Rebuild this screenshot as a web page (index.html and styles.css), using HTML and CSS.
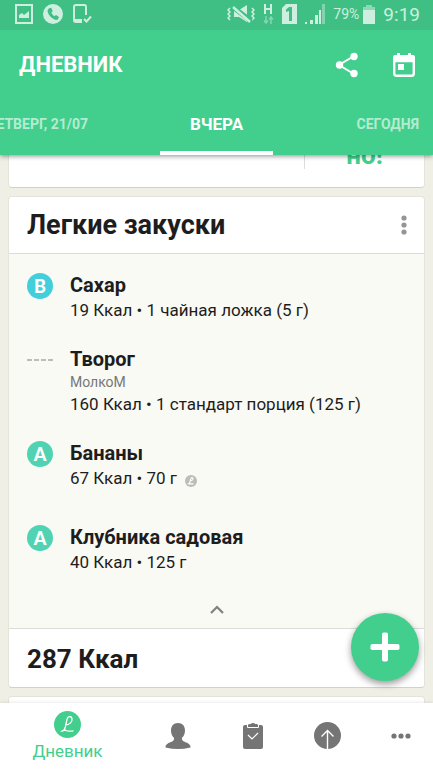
FILE: index.html
```
<!DOCTYPE html>
<html lang="ru">
<head>
<meta charset="utf-8">
<meta name="viewport" content="width=device-width, initial-scale=1">
<title>Дневник</title>
<link rel="stylesheet" href="styles.css">
</head>
<body>
<header class="top">
  <div class="status">
    <div class="status-left">
      <svg width="18" height="20" viewBox="0 0 18 20" fill="none" stroke="currentColor" stroke-width="2"><path d="M1 1h16v18H1z"/><path d="M4 14v-3l3-2 2 2 5-4v7z" fill="currentColor" stroke="none"/></svg>
      <svg width="20" height="20" viewBox="0 0 20 20"><circle cx="10" cy="10" r="10" fill="currentColor"/><path class="status-cut" d="M6.200 4.200 8.200 3.800 9.800 7.200 8.300 8.600Q9.200 10.800 11.400 12.200L13 11l3 2-1 2.300Q13.500 16.500 11 15.300 5.800 12.500 4.600 7.500 4.300 5.200 6.200 4.200z"/></svg>
      <svg width="19" height="20" viewBox="0 0 19 20" fill="none" stroke="currentColor" stroke-width="2"><path d="M13 11V3Q13 1 11.500 1H3Q1 1 1 3V16Q1 18 3 18H9M1 16H9"/><path d="m11 15 2.500 2.500L18 12.500"/></svg>
    </div>
    <div class="status-right">
      <svg width="28" height="20" viewBox="0 0 28 20" fill="none" stroke="currentColor"><path d="M3 4 1 6l2 2-2 2 2 2-2 2 2 2M25 4l2 2-2 2 2 2-2 2 2 2-2 2" stroke-width="1.500"/><path d="M7 6h5l8-5v17l-8-5H7z" fill="currentColor" stroke="none"/><path class="status-slash" d="M6 3l18 14" stroke-width="5"/><path d="M6 3l17 15" stroke-width="2.500"/></svg>
      <svg width="11" height="20" viewBox="0 0 11 20" fill="none" stroke="currentColor" stroke-width="2"><path d="M2 0v10M8 0v10M2 5h6"/><path d="M3 12v7M1 16.500l2 2.500 2-2.500M8 20v-7M6 15.500 8 13l2 2.500" stroke-width="1.500" opacity=".5"/></svg>
      <svg width="15" height="20" viewBox="0 0 15 20"><path d="M4 0h11v20H0V4z" fill="currentColor"/><path class="status-cut" d="M7 3h3v14H7V7L4 8V5.500z"/></svg>
      <svg width="20" height="20" viewBox="0 0 20 20" fill="currentColor"><path d="M0 18h2v2H0zM5 16h3v4H5zM10 11h3v9h-3zM14 6h2v14h-2z"/><path d="M17 0h3v20h-3z" opacity=".45"/></svg>
      <span class="battery-text">79%</span>
      <svg width="12" height="19" viewBox="0 0 12 19" fill="currentColor"><path d="M3 0h6v2h3v3H0V2h3z" opacity=".55"/><path d="M0 5h12v14H0z"/></svg>
      <span class="clock">9:19</span>
    </div>
  </div>
  <div class="toolbar">
    <h1 class="title">ДНЕВНИК</h1>
    <button class="tool" type="button" aria-label="Поделиться"><svg width="24" height="26" viewBox="0 0 24 26" fill="currentColor"><path d="M19 4 4 13l15 9" fill="none" stroke="currentColor" stroke-width="2"/><circle cx="19" cy="4.500" r="3.700"/><circle cx="4.500" cy="13" r="3.700"/><circle cx="19" cy="21.500" r="3.700"/></svg></button>
    <button class="tool" type="button" aria-label="Календарь"><svg width="22" height="26" viewBox="0 0 22 26" fill="none" stroke="currentColor"><path d="M1.200 9h19.600v12.500q0 2.300-2.300 2.300h-15q-2.300 0-2.300-2.300z" stroke-width="2.400"/><path d="M0 9V5q0-2 2-2h18q2 0 2 2v4z" fill="currentColor" stroke="none"/><path d="M5.500 1v4M16.500 1v4" stroke-width="3"/><path d="M5 12h6v6H5z" fill="currentColor" stroke="none"/></svg></button>
  </div>
  <nav class="tabs" aria-label="Дни">
    <a class="tab tab-prev" href="#">ЧЕТВЕРГ, 21/07</a>
    <a class="tab tab-current" href="#" aria-current="page">ВЧЕРА</a>
    <a class="tab tab-next" href="#">СЕГОДНЯ</a>
  </nav>
</header>

<main class="feed">
  <section class="card card-summary">
    <div class="summary-row"><span class="verdict">но!</span></div>
  </section>

  <section class="card">
    <div class="card-head">
      <h2 class="card-title">Легкие закуски</h2>
      <button class="more" type="button" aria-label="Ещё"><svg width="6" height="20" viewBox="0 0 6 20" fill="currentColor"><circle cx="3" cy="3" r="2.600"/><circle cx="3" cy="10" r="2.600"/><circle cx="3" cy="17" r="2.600"/></svg></button>
    </div>
    <div class="card-body">
      <ul class="foods">
        <li class="food">
          <span class="grade grade-b">B</span>
          <div class="food-text"><h3 class="food-name">Сахар</h3><p class="food-info">19 Ккал • 1 чайная ложка (5 г)</p></div>
        </li>
        <li class="food">
          <span class="grade-none"></span>
          <div class="food-text"><h3 class="food-name">Творог</h3><p class="food-brand">МолкоМ</p><p class="food-info">160 Ккал • 1 стандарт порция (125 г)</p></div>
        </li>
        <li class="food food-verified">
          <span class="grade grade-a">A</span>
          <div class="food-text"><h3 class="food-name">Бананы</h3><p class="food-info">67 Ккал • 70 г <svg class="verified" width="12" height="12" viewBox="0 0 27 27"><circle cx="13.500" cy="13.500" r="13.500" fill="currentColor"/><path d="M10 14c4 0 8-3 8-6s-4-3-5 1l-3 10q-1 2-2 1h11" fill="none" stroke="#fff" stroke-width="2.500"/></svg></p></div>
        </li>
        <li class="food">
          <span class="grade grade-a">A</span>
          <div class="food-text"><h3 class="food-name">Клубника садовая</h3><p class="food-info">40 Ккал • 125 г</p></div>
        </li>
      </ul>
      <button class="collapse" type="button" aria-label="Свернуть"><svg width="14" height="9" viewBox="0 0 14 9" fill="none" stroke="currentColor" stroke-width="2.200"><path d="M1 8l6-6 6 6"/></svg></button>
    </div>
    <p class="total">287 Ккал</p>
  </section>

  <section class="card card-next"></section>
</main>

<footer class="bottom">
  <button class="fab" type="button" aria-label="Добавить"><svg width="30" height="30" viewBox="0 0 30 30" fill="currentColor"><rect x="12" y="0.500" width="6" height="29" rx="1.800"/><rect x="0.500" y="12" width="29" height="6" rx="1.800"/></svg></button>
  <nav class="navbar" aria-label="Разделы">
    <a class="nav nav-active" href="#"><svg width="27" height="27" viewBox="0 0 27 27"><circle cx="13.500" cy="13.500" r="13.500" fill="currentColor"/><path d="M11 14C16 14 18.500 10.500 18 7.500 17 4.500 13.500 5 13 8.500L11.300 16Q10.500 20 8 20Q10 18.500 12 19.500T19.500 19.800" fill="none" stroke="#fff" stroke-width="1.300"/></svg><span>Дневник</span></a>
    <a class="nav" href="#" aria-label="Профиль"><svg width="26" height="26" viewBox="0 0 26 26" fill="currentColor"><path d="M13 0C17.500 0 20 3 20 7.500 20 11 18.800 13 17 14.800 16.500 17 17.500 18 20 19Q26 21 25.500 24.500 19 26 13 26T.500 24.500Q0 21 6 19C8.500 18 9.500 17 9 14.800 7.200 13 6 11 6 7.500 6 3 8.500 0 13 0z"/></svg></a>
    <a class="nav" href="#" aria-label="План"><svg width="20" height="26" viewBox="0 0 20 26"><path d="M2 2H18Q20 2 20 4V24Q20 26 18 26H2Q0 26 0 24V4Q0 2 2 2z" fill="currentColor"/><path d="M4.500 1.500V4.500H15.500V1.500" fill="none" stroke="#fff"/><path d="M5.500 1H8Q8 0 10 0T12 1H14.500V3.500H5.500z" fill="currentColor"/><path d="m5 12 4 4 6-6" fill="none" stroke="#fff" stroke-width="1.200"/></svg></a>
    <a class="nav" href="#" aria-label="Прогресс"><svg width="27" height="27" viewBox="0 0 27 27"><circle cx="13.500" cy="13.500" r="13.500" fill="currentColor"/><path d="M13.500 27V9M7.500 14.500l6-6 6 6" fill="none" stroke="#fff" stroke-width="1.400"/></svg></a>
    <a class="nav nav-last" href="#" aria-label="Меню"><svg width="20" height="6" viewBox="0 0 20 6" fill="currentColor"><circle cx="3" cy="3" r="2.600"/><circle cx="10" cy="3" r="2.600"/><circle cx="17" cy="3" r="2.600"/></svg></a>
  </nav>
</footer>
</body>
</html>
```
FILE: styles.css
```
* { box-sizing: border-box; }

body {
  margin: 0;
  height: 100vh;
  display: flex;
  flex-direction: column;
  overflow: hidden;
  background: #efefe6;
  color: #1d1d1d;
  font-family: Roboto, "Noto Sans", sans-serif;
}

h1, h2, h3, p, ul { margin: 0; padding: 0; }
ul { list-style: none; }
a { color: inherit; text-decoration: none; }
svg { display: block; flex: none; }
button {
  display: flex;
  align-items: center;
  justify-content: center;
  padding: 0;
  border: 0;
  background: none;
  color: inherit;
}

/* Header */
.top {
  position: relative;
  z-index: 1;
  flex: none;
  background: #42cf8d;
  color: #fff;
  box-shadow: 0 1px 5px rgba(0, 0, 0, .45);
}
.status {
  display: flex;
  justify-content: space-between;
  height: 30px;
  padding: 0 13px 2px 15px;
  background: #3fbf83;
  color: #ceefdf;
}
.status-left, .status-right { display: flex; align-items: center; }
.status-left { gap: 10px; }
.status-right { gap: 8px; }
.status-cut { fill: #3fbf83; }
.status-slash { stroke: #3fbf83; }
.battery-text { margin-right: -4px; font-size: 14px; }
.clock { font-size: 19px; }

.toolbar {
  display: flex;
  align-items: center;
  height: 69px;
  padding: 0 16px 0 19px;
}
.title { flex: 1; font-size: 22px; line-height: 28px; font-weight: 700; }
.tool { width: 26px; height: 40px; }
.tool + .tool { margin-left: 31px; }

.tabs {
  display: grid;
  grid-template-columns: minmax(0, 1fr) 113px minmax(0, 1fr);
  height: 56px;
  overflow: hidden;
}
.tab {
  display: flex;
  align-items: center;
  justify-content: flex-end;
  padding-bottom: 7px;
  white-space: nowrap;
  font-size: 14px;
  font-weight: 700;
  color: #b6ebd1;
}
.tab-prev { padding-right: 72px; }
.tab-next { padding-right: 14px; }
.tab-current {
  justify-content: center;
  padding-bottom: 3px;
  border-bottom: 4px solid #fff;
  font-size: 17px;
  color: #fff;
}

/* Feed */
.feed {
  flex: 1;
  min-height: 0;
  overflow: hidden;
  padding: 0 8px;
}
.card {
  margin-bottom: 8px;
  border: 1px solid #e4e4db;
  border-bottom-color: #d2d2ca;
  border-radius: 4px;
  background: #fff;
}
.card-summary {
  border-top: 0;
  border-radius: 0 0 4px 4px;
  padding-bottom: 18px;
}
.summary-row {
  display: flex;
  justify-content: flex-end;
  height: 14px;
}
.verdict {
  display: flex;
  align-items: flex-end;
  justify-content: center;
  width: 120px;
  border-left: 1px solid #ddd;
  font-size: 26px;
  line-height: 28px;
  font-weight: 700;
  color: #42cf8d;
}
.card-next { height: 60px; margin: 0; }

.card-head {
  display: flex;
  align-items: center;
  height: 57px;
  padding: 0 16px 0 18px;
  border-bottom: 1px solid #dcdcd8;
}
.card-title { flex: 1; font-size: 27px; line-height: 32px; }
.more { width: 8px; height: 32px; color: #959595; }

.card-body {
  padding: 19px 18px 0;
  border-bottom: 1px solid #dcdcd8;
  background: #f9faf4;
}
.foods { display: grid; gap: 24px; }
.food { display: flex; align-items: flex-start; gap: 17px; }
.food-verified { padding-bottom: 10px; }
.grade, .grade-none { flex: none; width: 26px; }
.grade {
  height: 26px;
  border-radius: 50%;
  text-align: center;
  font: 900 18px/26px Lato, sans-serif;
  color: #fff;
}
.grade-a { background: #50d3b3; }
.grade-b { background: #42cfdb; }
.grade-none {
  height: 2px;
  margin-top: 12px;
  background: repeating-linear-gradient(90deg, #bcbcb6 0 5px, transparent 5px 7px);
}
.food-name { font-size: 20px; line-height: 25px; }
.food-info {
  display: flex;
  align-items: center;
  gap: 8px;
  font-size: 17px;
  line-height: 25px;
}
.food-brand { font-size: 14px; line-height: 20px; color: #777; }
.verified { margin-top: 4px; color: #bcbcb8; }
.collapse {
  width: 100%;
  height: 53px;
  padding-top: 16px;
  color: #808080;
}
.total {
  padding: 2px 18px 0;
  font-size: 26px;
  line-height: 56px;
  font-weight: 700;
}

/* Bottom navigation */
.bottom {
  position: relative;
  z-index: 1;
  flex: none;
  background: #fff;
  box-shadow: 0 -1px 3px rgba(0, 0, 0, .08);
}
.fab {
  position: absolute;
  right: 14px;
  bottom: 89px;
  width: 68px;
  height: 68px;
  border-radius: 50%;
  background: #42cf8d;
  color: #fff;
  box-shadow: 0 3px 7px rgba(0, 0, 0, .4);
}
.navbar {
  display: grid;
  grid-template-columns: 141fr 74fr 75fr 74fr 69fr;
  height: 67px;
  padding-bottom: 2px;
}
.nav {
  display: flex;
  flex-direction: column;
  align-items: center;
  justify-content: center;
  color: #757575;
}
.nav-active {
  gap: 3px;
  padding-right: 6px;
  font-size: 17px;
  line-height: 20px;
  color: #42cf8d;
}
.nav-last { padding-left: 5px; }
```
